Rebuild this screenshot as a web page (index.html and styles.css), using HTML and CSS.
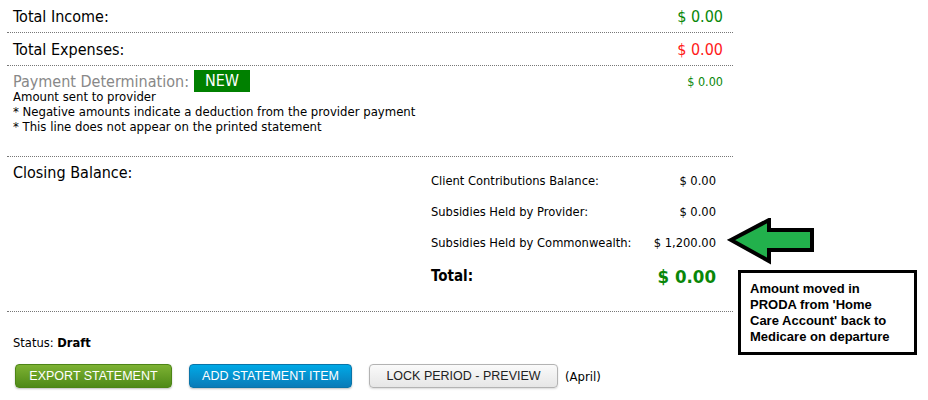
FILE: index.html
```html
<!DOCTYPE html>
<html>
<head>
<meta charset="utf-8">
<link rel="stylesheet" href="styles.css">
</head>
<body>
<div class="page">
  <div class="sheet">
    <div class="row row-main">
      <span class="label">Total Income:</span>
      <span class="amount green">$ 0.00</span>
    </div>
    <div class="row row-main">
      <span class="label">Total Expenses:</span>
      <span class="amount red">$ 0.00</span>
    </div>
    <div class="row row-payment">
      <div class="pay-head">
        <div class="pay-title"><span class="label grey">Payment Determination:</span><span class="badge">NEW</span></div>
        <span class="amount-small green">$ 0.00</span>
      </div>
      <div class="notes">
        <div class="note">Amount sent to provider</div>
        <div class="note">* Negative amounts indicate a deduction from the provider payment</div>
        <div class="note">* This line does not appear on the printed statement</div>
      </div>
    </div>
    <div class="row row-closing">
      <span class="label">Closing Balance:</span>
      <div class="balances">
        <div class="bal-row"><span>Client Contributions Balance:</span><span>$ 0.00</span></div>
        <div class="bal-row"><span>Subsidies Held by Provider:</span><span>$ 0.00</span></div>
        <div class="bal-row"><span>Subsidies Held by Commonwealth:</span><span>$ 1,200.00</span></div>
        <div class="bal-row bal-total"><span class="total-label">Total:</span><span class="total-amount">$ 0.00</span></div>
      </div>
    </div>
  </div>
  <div class="status">Status: <b>Draft</b></div>
  <div class="actions">
    <button class="btn btn-green">EXPORT STATEMENT</button>
    <button class="btn btn-blue">ADD STATEMENT ITEM</button>
    <button class="btn btn-grey">LOCK PERIOD - PREVIEW</button>
    <span class="period">(April)</span>
  </div>
  <svg class="arrow" width="90" height="48" viewBox="0 0 90 48">
    <polygon points="4,22 42,2 42,12 85,12 85,32 42,32 42,43" fill="#22b14c" stroke="#000" stroke-width="4" stroke-linejoin="miter"/>
  </svg>
  <div class="callout">Amount moved in PRODA from 'Home Care Account' back to Medicare on departure</div>
</div>
</body>
</html>
```

FILE: styles.css
```css
html, body {
  margin: 0;
  padding: 0;
  background: #fff;
}
.page {
  position: relative;
  width: 928px;
  height: 400px;
  overflow: hidden;
  font-family: "DejaVu Sans Condensed", "DejaVu Sans", sans-serif;
  font-stretch: condensed;
  color: #000;
}
.sheet {
  margin-left: 7px;
  width: 726px;
}
.row {
  border-bottom: 1px dotted #777;
  padding: 0 10px 0 6px;
}
.row-main {
  box-sizing: border-box;
  height: 33px;
  display: flex;
  justify-content: space-between;
  align-items: center;
}
.label {
  font-size: 16px;
}
.grey {
  color: #888;
}
.amount {
  font-size: 16px;
}
.green { color: #098709; }
.red { color: #ff1a1a; }
.row-payment {
  box-sizing: border-box;
  height: 91px;
  padding-top: 4px;
}
.pay-head {
  display: flex;
  justify-content: space-between;
  align-items: center;
  height: 22px;
}
.pay-title {
  display: flex;
  align-items: center;
  gap: 5px;
}
.badge {
  background: #008000;
  color: #fff;
  font-size: 16px;
  width: 56px;
  text-align: center;
  height: 22px;
  line-height: 22px;
}
.amount-small {
  font-size: 12.5px;
}
.notes {
  margin-top: -3px;
}
.note {
  font-size: 13px;
  line-height: 15px;
}
.row-closing {
  box-sizing: border-box;
  height: 155px;
  padding-top: 6px;
  display: flex;
  justify-content: space-between;
  align-items: flex-start;
  padding-right: 17px;
}
.balances {
  width: 285px;
  padding-top: 8px;
  display: flex;
  flex-direction: column;
  gap: 12px;
}
.bal-row {
  display: flex;
  justify-content: space-between;
  align-items: center;
  font-size: 12.8px;
  height: 19px;
}
.bal-total {
  height: 24px;
}
.total-label {
  font-weight: bold;
  font-size: 15px;
}
.total-amount {
  color: #098709;
  font-size: 18.5px;
  font-weight: bold;
}
.status {
  margin: 23px 0 0 13px;
  font-size: 12.8px;
  height: 16px;
}
.actions {
  margin: 13px 0 0 15px;
  display: flex;
  align-items: center;
  gap: 17px;
}
.btn {
  font-family: "Liberation Sans", Arial, sans-serif;
  font-size: 12.5px;
  height: 24px;
  border-radius: 4px;
  padding: 0;
  cursor: pointer;
}
.btn-green {
  width: 157px;
  color: #fff;
  border: 1px solid #4d8516;
  background: linear-gradient(#7db233, #4f8a17);
  box-shadow: 0 1px 2px rgba(0,0,0,0.25);
}
.btn-blue {
  width: 163px;
  color: #fff;
  border: 1px solid #0a74a8;
  background: linear-gradient(#00a9e6, #0a7bb8);
  box-shadow: 0 1px 2px rgba(0,0,0,0.25);
}
.btn-grey {
  width: 189px;
  color: #222;
  border: 1px solid #b3b3b3;
  background: linear-gradient(#fafafa, #e6e6e6);
  box-shadow: 0 1px 2px rgba(0,0,0,0.15);
}
.period {
  font-size: 13px;
  margin-left: -10px;
}
.arrow {
  position: absolute;
  left: 727px;
  top: 218px;
}
.callout {
  position: absolute;
  left: 738px;
  top: 270px;
  width: 179px;
  height: 85px;
  box-sizing: border-box;
  border: 3px solid #000;
  padding: 8px 16px 0 9px;
  font-family: "Liberation Sans", Arial, sans-serif;
  font-weight: bold;
  font-size: 13px;
  line-height: 16px;
}
```
